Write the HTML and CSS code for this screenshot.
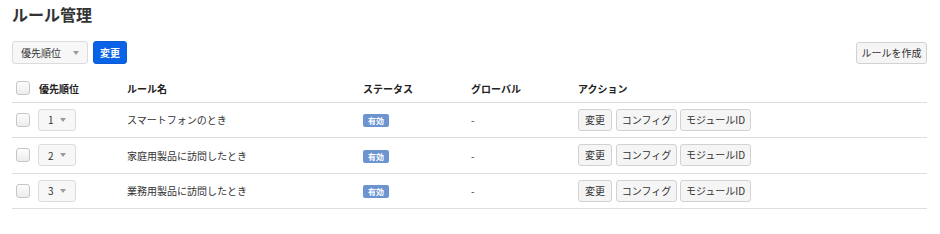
FILE: index.html
```html
<!DOCTYPE html>
<html lang="ja">
<head>
<meta charset="utf-8">
<link rel="stylesheet" href="styles.css">
</head>
<body>
<div class="page">
  <h1 class="title">ルール管理</h1>
  <div class="toolbar">
    <div class="toolbar-left">
      <div class="select select-lg"><span>優先順位</span><i class="caret"></i></div>
      <button class="btn btn-primary">変更</button>
    </div>
    <button class="btn btn-default btn-create">ルールを作成</button>
  </div>
  <table class="rules">
    <colgroup>
      <col class="c-check"><col class="c-prio"><col class="c-name"><col class="c-status"><col class="c-global"><col>
    </colgroup>
    <thead>
      <tr>
        <th><span class="check"></span></th>
        <th>優先順位</th>
        <th>ルール名</th>
        <th>ステータス</th>
        <th>グローバル</th>
        <th>アクション</th>
      </tr>
    </thead>
    <tbody>
      <tr>
        <td><span class="check"></span></td>
        <td><div class="select select-sm"><span>1</span><i class="caret"></i></div></td>
        <td>スマートフォンのとき</td>
        <td><span class="badge">有効</span></td>
        <td>-</td>
        <td><div class="actions"><button class="btn btn-default act-edit">変更</button><button class="btn btn-default act-config">コンフィグ</button><button class="btn btn-default act-module">モジュールID</button></div></td>
      </tr>
      <tr>
        <td><span class="check"></span></td>
        <td><div class="select select-sm"><span>2</span><i class="caret"></i></div></td>
        <td>家庭用製品に訪問したとき</td>
        <td><span class="badge">有効</span></td>
        <td>-</td>
        <td><div class="actions"><button class="btn btn-default act-edit">変更</button><button class="btn btn-default act-config">コンフィグ</button><button class="btn btn-default act-module">モジュールID</button></div></td>
      </tr>
      <tr>
        <td><span class="check"></span></td>
        <td><div class="select select-sm"><span>3</span><i class="caret"></i></div></td>
        <td>業務用製品に訪問したとき</td>
        <td><span class="badge">有効</span></td>
        <td>-</td>
        <td><div class="actions"><button class="btn btn-default act-edit">変更</button><button class="btn btn-default act-config">コンフィグ</button><button class="btn btn-default act-module">モジュールID</button></div></td>
      </tr>
    </tbody>
  </table>
</div>
</body>
</html>
```
FILE: styles.css
```css
* { box-sizing: border-box; }
html, body { margin: 0; padding: 0; background: #fff; }
body {
  font-family: "Noto Sans CJK JP", "Liberation Sans", sans-serif;
  font-size: 10px;
  color: #333;
}
.page { padding: 0 13px 0 12px; }
.title {
  margin: 0;
  padding-top: 4px;
  font-size: 16px;
  line-height: 20px;
  font-weight: bold;
  color: #333;
}
.toolbar {
  margin-top: 17px;
  display: flex;
  justify-content: space-between;
  align-items: center;
  height: 23px;
}
.toolbar-left { display: flex; gap: 5px; align-items: center; }
.select {
  display: flex;
  align-items: center;
  justify-content: space-between;
  background: #f7f7f7;
  border: 1px solid #dcdcdc;
  border-radius: 3px;
  color: #333;
}
.select-lg { width: 76px; height: 23px; padding: 0 8px 0 8px; }
.select-sm { width: 38px; height: 22px; padding: 0 9px 0 9px; }
.caret {
  display: block;
  width: 0; height: 0;
  border-left: 3.5px solid transparent;
  border-right: 3.5px solid transparent;
  border-top: 4px solid #9a9a9a;
}
.btn {
  font-family: inherit;
  font-size: 10px;
  line-height: 1;
  border-radius: 3px;
  cursor: pointer;
  margin: 0;
}
.btn-primary {
  width: 34px; height: 23px;
  padding: 0;
  background: #0a63e6;
  border: 1px solid #0a5cd6;
  color: #fff;
  font-weight: bold;
}
.btn-default {
  height: 22px;
  padding: 0;
  background: #f5f5f5;
  border: 1px solid #d2d2d2;
  color: #333;
}
.btn-create { width: 71px; height: 22px; }
.rules {
  margin-top: 12px;
  width: 100%;
  border-collapse: collapse;
  table-layout: fixed;
}
.c-check { width: 26px; }
.c-prio { width: 89px; }
.c-name { width: 236px; }
.c-status { width: 108px; }
.c-global { width: 107px; }
.rules th {
  height: 26px;
  text-align: left;
  font-weight: bold;
  color: #222;
  padding: 0 0 1px 0;
  border-bottom: 1px solid #dedede;
  vertical-align: middle;
}
.rules th:nth-child(2) { padding-left: 1px; }
.rules td {
  height: 35.5px;
  padding: 0;
  border-bottom: 1px solid #dedede;
  vertical-align: middle;
}
.check {
  display: block;
  width: 14px; height: 14px;
  margin-left: 4px;
  border: 1px solid #c6c6c6;
  border-radius: 3px;
  background: linear-gradient(#fdfdfd, #ececec);
}
.badge {
  display: inline-block;
  width: 26px; height: 13px;
  line-height: 13px;
  text-align: center;
  font-size: 8px;
  font-weight: bold;
  color: #fff;
  background: #6c94cf;
  border-radius: 2px;
}
.actions { display: flex; gap: 3px; }
.act-edit { width: 34px; margin-right: 1px; }
.act-config { width: 61px; }
.act-module { width: 71px; }
```
